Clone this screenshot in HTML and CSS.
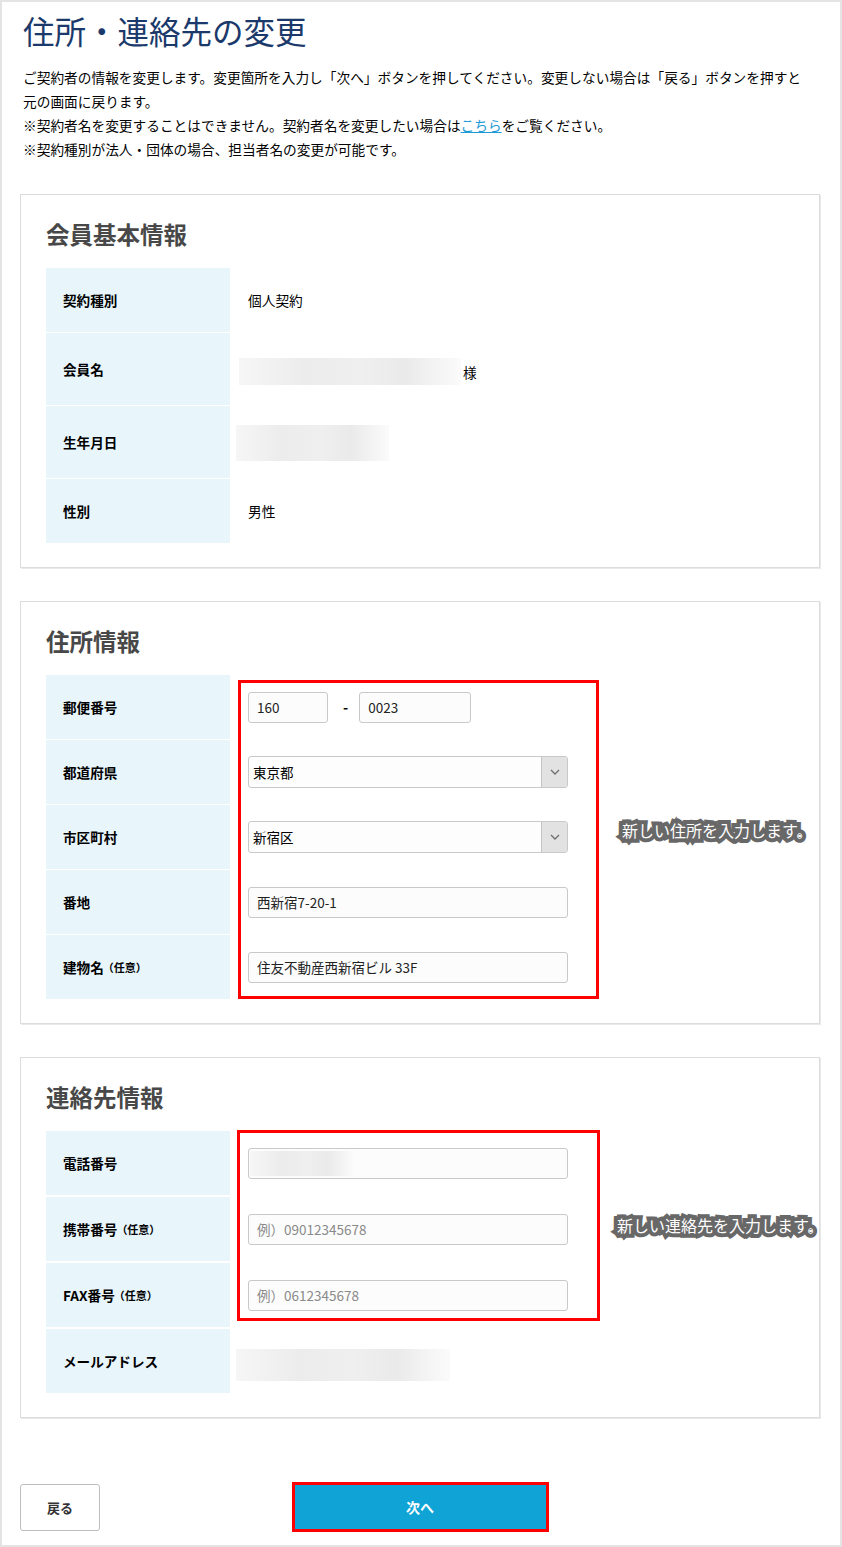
FILE: index.html
```html
<!DOCTYPE html>
<html lang="ja">
<head>
    <meta charset="UTF-8">
    <meta name="viewport" content="width=device-width, initial-scale=1.0">
    <title>住所・連絡先の変更</title>
    <link rel="stylesheet" href="styles.css">
</head>
<body>
    <div class="page">
        <h1 class="page-title">住所・連絡先の変更</h1>
        <p class="lead">
            ご契約者の情報を変更します。変更箇所を入力し「次へ」ボタンを押してください。変更しない場合は「戻る」ボタンを押すと<br>
            元の画面に戻ります。<br>
            ※契約者名を変更することはできません。契約者名を変更したい場合は<a href="#">こちら</a>をご覧ください。<br>
            ※契約種別が法人・団体の場合、担当者名の変更が可能です。
        </p>

        <section class="card">
            <h2>会員基本情報</h2>
            <div class="table">
                <div class="row">
                    <div class="label">契約種別</div>
                    <div class="value">個人契約</div>
                </div>
                <div class="row tall">
                    <div class="label">会員名</div>
                    <div class="value"><span class="masked name-mask"></span><span class="sama">様</span></div>
                </div>
                <div class="row tall">
                    <div class="label">生年月日</div>
                    <div class="value"><span class="masked birth-mask"></span></div>
                </div>
                <div class="row">
                    <div class="label">性別</div>
                    <div class="value">男性</div>
                </div>
            </div>
        </section>

        <section class="card">
            <h2>住所情報</h2>
            <div class="table">
                <div class="row">
                    <div class="label">郵便番号</div>
                    <div class="value">
                        <input class="field zip1" type="text" value="160">
                        <span class="dash">-</span>
                        <input class="field zip2" type="text" value="0023">
                    </div>
                </div>
                <div class="row">
                    <div class="label">都道府県</div>
                    <div class="value">
                        <div class="select">
                            <select><option>東京都</option></select>
                            <span class="select-btn"><svg width="10" height="6" viewBox="0 0 10 6"><path d="M1 1l4 4 4-4" fill="none" stroke="#6d6d6d" stroke-width="1.3"/></svg></span>
                        </div>
                    </div>
                </div>
                <div class="row">
                    <div class="label">市区町村</div>
                    <div class="value">
                        <div class="select">
                            <select><option>新宿区</option></select>
                            <span class="select-btn"><svg width="10" height="6" viewBox="0 0 10 6"><path d="M1 1l4 4 4-4" fill="none" stroke="#6d6d6d" stroke-width="1.3"/></svg></span>
                        </div>
                    </div>
                </div>
                <div class="row">
                    <div class="label">番地</div>
                    <div class="value"><input class="field wide" type="text" value="西新宿7-20-1"></div>
                </div>
                <div class="row">
                    <div class="label">建物名<small>（任意）</small></div>
                    <div class="value"><input class="field wide" type="text" value="住友不動産西新宿ビル 33F"></div>
                </div>
                <div class="mark mark-address"></div>
                <div class="note note-address">新しい住所を入力します。</div>
            </div>
        </section>

        <section class="card">
            <h2>連絡先情報</h2>
            <div class="table loose">
                <div class="row">
                    <div class="label">電話番号</div>
                    <div class="value">
                        <div class="field wide masked-field"><span class="masked tel-mask"></span></div>
                    </div>
                </div>
                <div class="row">
                    <div class="label">携帯番号<small>（任意）</small></div>
                    <div class="value"><input class="field wide" type="text" placeholder="例）09012345678"></div>
                </div>
                <div class="row">
                    <div class="label">FAX番号<small>（任意）</small></div>
                    <div class="value"><input class="field wide" type="text" placeholder="例）0612345678"></div>
                </div>
                <div class="row">
                    <div class="label">メールアドレス</div>
                    <div class="value"><span class="masked mail-mask"></span></div>
                </div>
                <div class="mark mark-contact"></div>
                <div class="note note-contact">新しい連絡先を入力します。</div>
            </div>
        </section>

        <div class="actions">
            <button class="btn-back" type="button">戻る</button>
            <button class="btn-next" type="submit">次へ</button>
        </div>
    </div>
</body>
</html>
```

FILE: styles.css
```css
body {
    margin: 0;
    padding: 0;
    font-family: "Noto Sans CJK JP", "Noto Sans", sans-serif;
    color: #000;
    background: #fff;
}
.page {
    box-sizing: border-box;
    width: 842px;
    min-height: 1547px;
    border: 2px solid #e4e4e4;
    padding: 0 20px 0 18px;
}
.page-title {
    margin: 0;
    padding: 10px 0 0 3px;
    font-size: 31.5px;
    font-weight: 400;
    line-height: 36px;
    color: #1b3a6b;
}
.lead {
    margin: 17px 0 0;
    padding-left: 3px;
    font-size: 13.7px;
    line-height: 24px;
    color: #000;
}
.lead a {
    color: #1e9ad6;
}
.card {
    width: 800px;
    box-sizing: border-box;
    margin-top: 33px;
    padding: 24px 24px 24px 25px;
    border: 1px solid #dcdcdc;
    box-shadow: 1px 1px 0 #e8e8e8;
    background: #fff;
}
.card h2 {
    margin: 0 0 19px;
    font-size: 23.5px;
    line-height: 30px;
    font-weight: 700;
    color: #484848;
}
.table {
    position: relative;
    display: flex;
    flex-direction: column;
    gap: 1px;
}
.table.loose {
    gap: 2px;
}
.row {
    display: flex;
    height: 64px;
}
.row.tall {
    height: 72px;
}
.label {
    width: 184px;
    flex: none;
    box-sizing: border-box;
    padding-left: 17px;
    display: flex;
    align-items: center;
    background: #e8f6fc;
    font-size: 13.6px;
    font-weight: 700;
}
.label small {
    font-size: 11px;
    font-weight: 700;
    margin-left: -1px;
}
.value {
    flex: 1;
    padding-left: 18px;
    display: flex;
    align-items: center;
    font-size: 13.7px;
}
.masked {
    display: inline-block;
    background: linear-gradient(90deg, #f6f6f6 0%, #ececec 30%, #efefef 55%, #eaeaea 75%, #fbfbfb 100%);
    filter: blur(0.6px);
}
.name-mask {
    width: 222px;
    height: 27px;
    margin: 5px 0 0 -9px;
}
.sama {
    margin: 6px 0 0 2px;
}
.birth-mask {
    width: 153px;
    height: 36px;
    margin: 2px 0 0 -12px;
}
.mail-mask {
    width: 214px;
    height: 32px;
    margin: 7px 0 0 -12px;
}
.field {
    box-sizing: border-box;
    height: 31px;
    padding: 0 8px;
    border: 1px solid #c9c9c9;
    border-radius: 3px;
    background: #fcfcfc;
    font-family: inherit;
    font-size: 13.5px;
    color: #222;
    outline: none;
}
.field::placeholder {
    color: #8a8a8a;
}
.zip1 {
    width: 80px;
}
.zip2 {
    width: 112px;
}
.dash {
    margin: 0 11px 0 15px;
    font-size: 14px;
    font-weight: 700;
}
.wide {
    width: 320px;
}
.masked-field {
    display: flex;
    align-items: center;
    padding: 0 0 0 1px;
}
.tel-mask {
    width: 104px;
    height: 25px;
}
.select {
    position: relative;
    width: 320px;
    height: 32px;
}
.select select {
    appearance: none;
    -webkit-appearance: none;
    box-sizing: border-box;
    width: 100%;
    height: 100%;
    padding: 0 30px 0 4px;
    border: 1px solid #c9c9c9;
    border-radius: 3px;
    background: #fdfdfd;
    font-family: inherit;
    font-size: 13.5px;
    color: #000;
}
.select-btn {
    position: absolute;
    top: 1px;
    right: 1px;
    bottom: 1px;
    width: 25px;
    display: flex;
    align-items: center;
    justify-content: center;
    background: #e2e2e2;
    border-left: 1px solid #c4c4c4;
    border-radius: 0 2px 2px 0;
}
.mark {
    position: absolute;
    box-sizing: border-box;
    border: 3px solid #f00;
}
.mark-address {
    left: 192px;
    top: 5px;
    width: 361px;
    height: 319px;
}
.mark-contact {
    left: 191px;
    top: -1px;
    width: 363px;
    height: 191px;
}
.note {
    position: absolute;
    font-size: 16px;
    line-height: 24px;
    color: #fff;
    white-space: nowrap;
    -webkit-text-stroke: 8px #686868;
    paint-order: stroke fill;
    stroke-linejoin: round;
}
.note-address {
    left: 576px;
    top: 143px;
}
.note-contact {
    left: 571px;
    top: 82px;
}
.actions {
    width: 800px;
    margin-top: 64px;
    display: grid;
    grid-template-columns: 1fr 257px 1fr;
    align-items: center;
}
.btn-back {
    justify-self: start;
    width: 80px;
    height: 47px;
    border: 1px solid #bdbdbd;
    border-radius: 3px;
    background: #fff;
    font-family: inherit;
    font-size: 13px;
    font-weight: 700;
    color: #333;
    cursor: pointer;
}
.btn-next {
    width: 257px;
    height: 50px;
    border: 3px solid #f00;
    background: #0fa3d6;
    font-family: inherit;
    font-size: 14px;
    font-weight: 700;
    color: #fff;
    cursor: pointer;
}
```
